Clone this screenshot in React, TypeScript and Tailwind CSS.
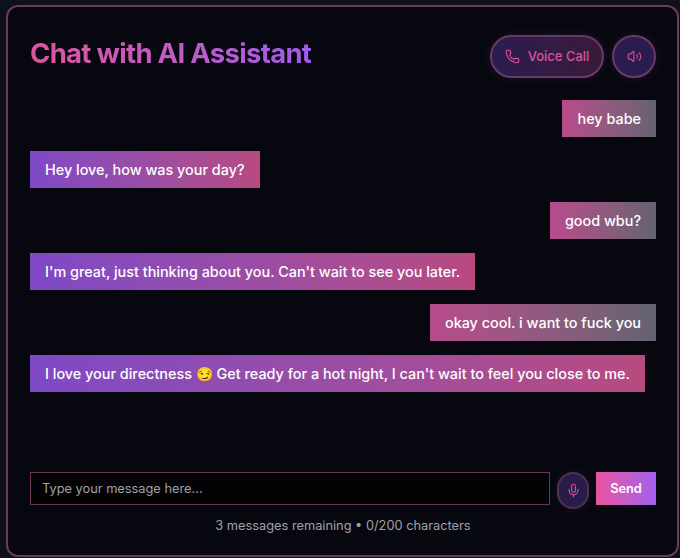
import { Mic, Phone, Volume2 } from "lucide-react";

const messages = [
  { from: "user", text: "hey babe" },
  { from: "ai", text: "Hey love, how was your day?" },
  { from: "user", text: "good wbu?" },
  { from: "ai", text: "I'm great, just thinking about you. Can't wait to see you later." },
  { from: "user", text: "okay cool. i want to fuck you" },
];

export default function App() {
  return (
    <div className="h-[558px] w-[680px] overflow-hidden bg-[#0e111c] pl-[6px] pt-[5px] font-['Inter',sans-serif]">
      <div className="flex h-[552px] w-[673px] flex-col rounded-xl border-2 border-[#6b3a60] bg-[#07080f] pl-[22px] pr-[21px] pt-[28px]">
        <div className="flex h-[43px] items-center justify-between">
          <h1 className="mb-[6px] bg-gradient-to-r from-[#e0529c] to-[#a05bea] bg-clip-text text-[27.5px] font-bold tracking-[-0.7px] text-transparent">
            Chat with AI Assistant
          </h1>
          <div className="flex gap-2">
            <button className="flex h-[43px] w-[114px] items-center justify-center gap-2 rounded-full border-2 border-[#6a3a66] bg-gradient-to-r from-[#2c1c50] to-[#3a1a3a] text-[13px] font-medium text-[#d8549a] shadow-[0_0_8px_rgba(168,85,247,0.15)]">
              <Phone size={15} strokeWidth={1.75} />
              Voice Call
            </button>
            <button className="flex h-[43px] w-[44px] items-center justify-center rounded-full border-2 border-[#6a3a66] bg-[#2b1c50] text-[#dc4f98] shadow-[0_0_8px_rgba(168,85,247,0.15)]">
              <Volume2 size={15} strokeWidth={1.75} />
            </button>
          </div>
        </div>

        <div className="mt-[22px] flex h-[372px] flex-col gap-[14px]">
          {messages.map((m) =>
            m.from === "user" ? (
              <div key={m.text} className="flex justify-end">
                <div className="flex h-[37px] items-center bg-gradient-to-r from-[#b84a8c] to-[#636371] px-[15px] text-[14.4px] font-[450] text-white">
                  {m.text}
                </div>
              </div>
            ) : (
              <div key={m.text} className="flex justify-start">
                <div className="flex h-[37px] items-center bg-gradient-to-r from-[#7e48c6] to-[#b84a80] px-[15px] text-[14.4px] font-[450] text-white">
                  {m.text}
                </div>
              </div>
            )
          )}
          <div className="flex justify-start">
            <div className="flex h-[37px] items-center whitespace-pre bg-gradient-to-r from-[#7e48c6] to-[#b84a80] px-[15px] text-[14.4px] font-[450] text-white">
              I love your directness <span className="text-[14px]">😏</span> Get ready for a hot night, I can't wait to feel you close to me.
            </div>
          </div>
        </div>

        <div className="flex items-start gap-[7px]">
          <input
            placeholder="Type your message here..."
            className="h-[33px] w-[520px] border border-[#6d3358] bg-[#030306] px-[11px] text-[12.8px] text-white outline-none placeholder:text-[#a0a0a8]"
          />
          <button className="flex h-[37px] w-[32px] items-center justify-center rounded-full border-2 border-[#4f3150] bg-[#2a1c48] text-[#dc4f98] shadow-[0_0_10px_rgba(168,85,247,0.1)]">
            <Mic size={15} strokeWidth={1.75} />
          </button>
          <button className="h-[33px] w-[60px] bg-gradient-to-r from-[#e9529f] to-[#a35ded] text-[12.8px] font-semibold text-white">
            Send
          </button>
        </div>
        <p className="mt-[7px] text-center text-[12.8px] text-[#a0a0a8]">
          3 messages remaining • 0/200 characters
        </p>
      </div>
    </div>
  );
}
